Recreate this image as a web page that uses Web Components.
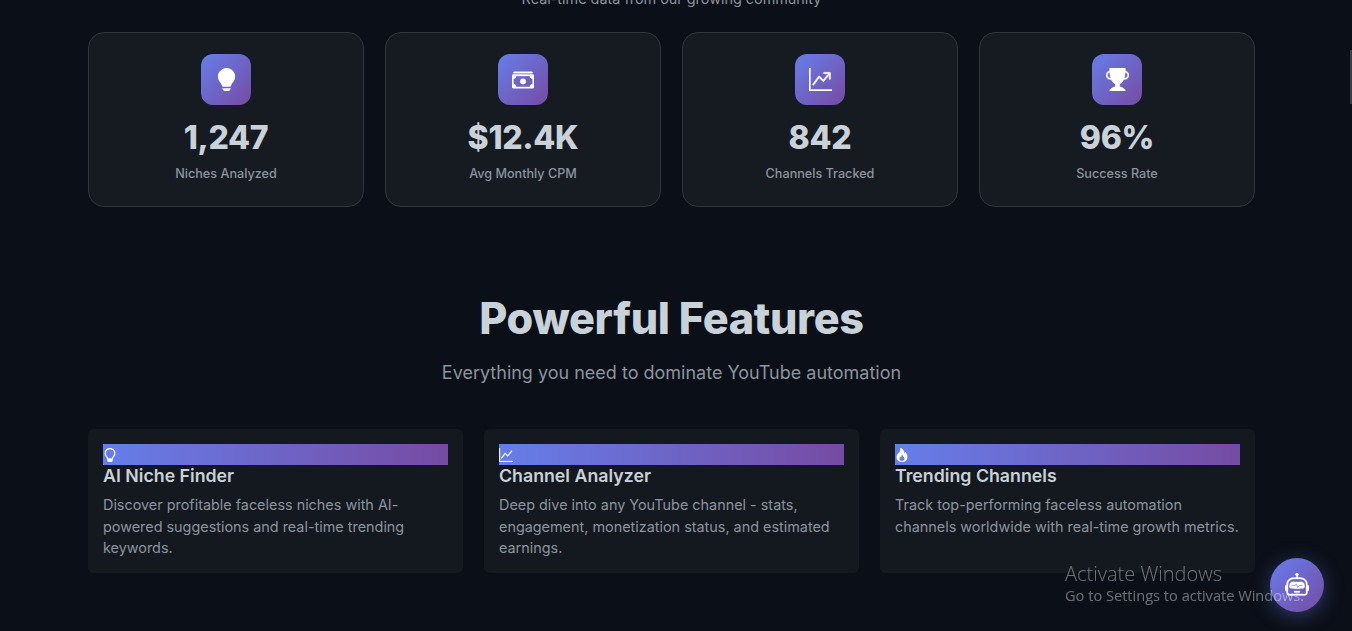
<!DOCTYPE html>
<html lang="en">
<head>
<meta charset="utf-8">
<title>Powerful Features</title>
<style>
  html, body { margin: 0; height: 631px; overflow: hidden; background: #0b0f17; }
  body { font-family: 'Inter', 'Liberation Sans', sans-serif; color: #c9d1d9; }
  #page { display: flex; flex-direction: column; align-items: center; width: 1343px; margin-top: -13px; }
  #stats, #features { width: 1167px; display: grid; gap: 21px; }
  #stats { grid-template-columns: repeat(4, 1fr); }
  #features { grid-template-columns: repeat(3, 1fr); }
  #tagline { font-size: 14.4px; line-height: 24px; color: #8b949e; margin-bottom: 21px; }
</style>
</head>
<body>
<div id="page">
  <div id="tagline">Real-time data from our growing community</div>
  <div id="stats">
    <stat-card icon="lightbulb-fill" value="1,247">Niches Analyzed</stat-card>
    <stat-card icon="cash-stack" value="$12.4K">Avg Monthly CPM</stat-card>
    <stat-card icon="graph-up-arrow" value="842">Channels Tracked</stat-card>
    <stat-card icon="trophy-fill" value="96%">Success Rate</stat-card>
  </div>
  <section-heading title="Powerful Features">Everything you need to dominate YouTube automation</section-heading>
  <div id="features">
    <feature-card icon="lightbulb" title="AI Niche Finder">Discover profitable faceless niches with AI-powered suggestions and real-time trending keywords.</feature-card>
    <feature-card icon="graph-up" title="Channel Analyzer">Deep dive into any YouTube channel - stats, engagement, monetization status, and estimated earnings.</feature-card>
    <feature-card icon="fire" title="Trending Channels">Track top-performing faceless automation channels worldwide with real-time growth metrics.</feature-card>
  </div>
</div>
<chat-fab></chat-fab>
<activate-note></activate-note>
<scroll-thumb></scroll-thumb>

<script>
(function() {
  const icons = {
    'lightbulb-fill': 'M2 6a6 6 0 1 1 10.174 4.31c-.203.196-.359.4-.453.619l-.762 1.769A.5.5 0 0 1 10.5 13h-5a.5.5 0 0 1-.46-.302l-.761-1.77a2 2 0 0 0-.453-.618A5.98 5.98 0 0 1 2 6m3 8.5a.5.5 0 0 1 .5-.5h5a.5.5 0 0 1 0 1l-.224.447a1 1 0 0 1-.894.553H6.618a1 1 0 0 1-.894-.553L5.5 15a.5.5 0 0 1-.5-.5',
    'lightbulb': 'M2 6a6 6 0 1 1 10.174 4.31c-.203.196-.359.4-.453.619l-.762 1.769A.5.5 0 0 1 10.5 13a.5.5 0 0 1 0 1 .5.5 0 0 1 0 1l-.224.447a1 1 0 0 1-.894.553H6.618a1 1 0 0 1-.894-.553L5.5 15a.5.5 0 0 1 0-1 .5.5 0 0 1 0-1 .5.5 0 0 1-.46-.302l-.761-1.77a2 2 0 0 0-.453-.618A5.98 5.98 0 0 1 2 6m6-5a5 5 0 0 0-3.479 8.592c.263.254.514.564.676.941L5.83 12h4.342l.632-1.467c.162-.377.413-.687.676-.941A5 5 0 0 0 8 1',
    'cash-stack': 'M1 3a1 1 0 0 1 1-1h12a1 1 0 0 1 1 1zm7 8a2 2 0 1 0 0-4 2 2 0 0 0 0 4M0 5a1 1 0 0 1 1-1h14a1 1 0 0 1 1 1v8a1 1 0 0 1-1 1H1a1 1 0 0 1-1-1zm3 0a2 2 0 0 1-2 2v4a2 2 0 0 1 2 2h10a2 2 0 0 1 2-2V7a2 2 0 0 1-2-2z',
    'graph-up-arrow': 'M0 0h1v15h15v1H0zm10 3.5a.5.5 0 0 1 .5-.5h4a.5.5 0 0 1 .5.5v4a.5.5 0 0 1-1 0V4.9l-3.613 4.417a.5.5 0 0 1-.74.037L7.06 6.767l-3.656 5.027a.5.5 0 0 1-.808-.588l4-5.5a.5.5 0 0 1 .758-.06l2.609 2.61L13.445 4H10.5a.5.5 0 0 1-.5-.5',
    'graph-up': 'M0 0h1v15h15v1H0zm14.817 3.113a.5.5 0 0 1 .07.704l-4.5 5.5a.5.5 0 0 1-.74.037L7.06 6.767l-3.656 5.027a.5.5 0 0 1-.808-.588l4-5.5a.5.5 0 0 1 .758-.06l2.609 2.61 4.15-5.073a.5.5 0 0 1 .704-.07',
    'trophy-fill': 'M2.5.5A.5.5 0 0 1 3 0h10a.5.5 0 0 1 .5.5q0 .807-.034 1.536a3 3 0 1 1-1.133 5.89c-.79 1.865-1.878 2.777-2.833 3.011v2.173l1.425.356c.194.048.377.135.537.255L13.3 15.1a.5.5 0 0 1-.3.9H3a.5.5 0 0 1-.3-.9l1.838-1.379c.16-.12.343-.207.537-.255L6.5 13.11v-2.173c-.955-.234-2.043-1.146-2.833-3.012a3 3 0 1 1-1.132-5.89A33 33 0 0 1 2.5.5m.099 2.54a2 2 0 0 0 .72 3.935c-.333-1.05-.588-2.346-.72-3.935m10.083 3.935a2 2 0 0 0 .72-3.935c-.133 1.59-.388 2.885-.72 3.935',
    'fire': 'M8 16c3.314 0 6-2 6-5.5 0-1.5-.5-4-2.5-6 .25 1.5-1.25 2-1.25 2C11 4 9 .5 6 0c.357 2 .5 4-2 6-1.25 1-2 2.729-2 4.5C2 14 4.686 16 8 16m0-1c-1.657 0-3-1-3-2.75 0-.75.25-2 1.25-3C6.125 10 7 10.5 7 10.5c-.375-1.25.5-3.25 2-3.5-.179 1-.25 2 1 3 .625.5 1 1.364 1 2.25C11 14 9.657 15 8 15',
    'robot': 'M6 12.5a.5.5 0 0 1 .5-.5h3a.5.5 0 0 1 0 1h-3a.5.5 0 0 1-.5-.5M3 8.062C3 6.76 4.235 5.765 5.53 5.886a26.6 26.6 0 0 0 4.94 0C11.765 5.765 13 6.76 13 8.062v1.157a.93.93 0 0 1-.765.935c-.845.147-2.34.346-4.235.346s-3.39-.2-4.235-.346A.93.93 0 0 1 3 9.219zm4.542-.827a.25.25 0 0 0-.217.068l-.92.9a25 25 0 0 1-1.871-.183.25.25 0 0 0-.068.495c.55.076 1.232.149 2.02.193a.25.25 0 0 0 .189-.071l.754-.736.847 1.71a.25.25 0 0 0 .404.062l.932-.97a25 25 0 0 0 1.922-.188.25.25 0 0 0-.068-.495c-.538.074-1.207.145-1.98.189a.25.25 0 0 0-.166.076l-.754.785-.842-1.7a.25.25 0 0 0-.182-.135M8.5 1.866a1 1 0 1 0-1 0V3h-2A4.5 4.5 0 0 0 1 7.5V8a1 1 0 0 0-1 1v2a1 1 0 0 0 1 1v1a2 2 0 0 0 2 2h10a2 2 0 0 0 2-2v-1a1 1 0 0 0 1-1V9a1 1 0 0 0-1-1v-.5A4.5 4.5 0 0 0 10.5 3h-2zM14 7.5V13a1 1 0 0 1-1 1H3a1 1 0 0 1-1-1V7.5A3.5 3.5 0 0 1 5.5 4h5A3.5 3.5 0 0 1 14 7.5'
  };

  function iconSvg(name, size, bold) {
    const stroke = bold ? ` stroke="#fff" stroke-width="${bold}"` : '';
    return `<svg xmlns="http://www.w3.org/2000/svg" width="${size}" height="${size}" viewBox="0 0 16 16" fill="#fff"${stroke}><path fill-rule="evenodd" d="${icons[name]}"/></svg>`;
  }

  class StatCard extends HTMLElement {
    constructor() {
      super();
      this.attachShadow({mode: 'open'});
    }
    connectedCallback() {
      const name = this.getAttribute('icon');
      const size = name === 'cash-stack' ? 22 : 23;
      const bold = name === 'lightbulb-fill' ? 0 : 0.3;
      this.shadowRoot.innerHTML = `
      <style>
        :host {
          display: flex;
          flex-direction: column;
          align-items: center;
          box-sizing: border-box;
          height: 175px;
          padding-top: 21px;
          background: #161b22;
          border: 1px solid #30363d;
          border-radius: 16px;
        }
        #icon {
          width: 50px;
          height: 51px;
          display: flex;
          align-items: center;
          justify-content: center;
          background: linear-gradient(135deg, #667eea, #764ba2);
          border-radius: 12px;
        }
        #value {
          margin-top: 12px;
          font-size: 32px;
          line-height: 42px;
          font-weight: 800;
          letter-spacing: -0.3px;
          color: #c9d1d9;
        }
        #label {
          margin-top: 5px;
          font-size: 12.64px;
          line-height: 20px;
          font-weight: 500;
          color: #8b949e;
        }
      </style>
      <div id="icon">${iconSvg(name, size, bold)}</div>
      <div id="value">${this.getAttribute('value')}</div>
      <div id="label"><slot></slot></div>`;
    }
  }

  class SectionHeading extends HTMLElement {
    constructor() {
      super();
      this.attachShadow({mode: 'open'});
    }
    connectedCallback() {
      this.shadowRoot.innerHTML = `
      <style>
        :host {
          display: block;
          text-align: center;
          padding: 84px 0 42px;
        }
        h2 {
          margin: 0;
          font-size: 43.2px;
          line-height: 54px;
          font-weight: 800;
          letter-spacing: -0.32px;
          color: #c9d1d9;
        }
        p {
          margin: 14px 0 0;
          font-size: 18px;
          line-height: 28px;
          color: #8b949e;
        }
      </style>
      <h2>${this.getAttribute('title')}</h2>
      <p><slot></slot></p>`;
    }
  }

  class FeatureCard extends HTMLElement {
    constructor() {
      super();
      this.attachShadow({mode: 'open'});
    }
    connectedCallback() {
      this.shadowRoot.innerHTML = `
      <style>
        :host {
          display: block;
          box-sizing: border-box;
          height: 144px;
          padding: 15px;
          background: #141920;
          border-radius: 6px;
        }
        #bar {
          height: 21px;
          display: flex;
          align-items: center;
          background: linear-gradient(90deg, #667eea, #764ba2);
        }
        #bar svg { display: block; }
        h3 {
          margin: 0;
          font-size: 17.76px;
          line-height: 21px;
          font-weight: 600;
          color: #c9d1d9;
        }
        p {
          margin: 8px 0 0;
          font-size: 14.4px;
          line-height: 21.6px;
          color: #8b949e;
        }
      </style>
      <div id="bar">${iconSvg(this.getAttribute('icon'), 14, 0.4)}</div>
      <h3>${this.getAttribute('title')}</h3>
      <p><slot></slot></p>`;
    }
  }

  class ChatFab extends HTMLElement {
    constructor() {
      super();
      this.attachShadow({mode: 'open'});
      this.shadowRoot.innerHTML = `
      <style>
        :host {
          position: fixed;
          left: 1270px;
          top: 558px;
          width: 54px;
          height: 54px;
          display: flex;
          align-items: center;
          justify-content: center;
          border-radius: 50%;
          background: linear-gradient(135deg, #667eea, #764ba2);
          box-shadow: 0 4px 20px rgba(102, 126, 234, 0.4);
        }
      </style>
      ${iconSvg('robot', 24, 0.2)}`;
    }
  }

  class ActivateNote extends HTMLElement {
    constructor() {
      super();
      this.attachShadow({mode: 'open'});
      this.shadowRoot.innerHTML = `
      <style>
        :host {
          position: fixed;
          left: 1065px;
          top: 561px;
          font-family: 'Open Sans', 'Noto Sans', sans-serif;
          color: rgba(255, 255, 255, 0.4);
          white-space: nowrap;
        }
        #big { font-size: 20px; line-height: 25px; font-weight: 300; }
        #small { font-size: 14.6px; line-height: 19px; font-weight: 400; }
      </style>
      <div id="big">Activate Windows</div>
      <div id="small">Go to Settings to activate Windows.</div>`;
    }
  }

  // bit of the window scrollbar visible at the right edge
  class ScrollThumb extends HTMLElement {
    constructor() {
      super();
      this.attachShadow({mode: 'open'});
      this.shadowRoot.innerHTML = `
      <style>
        :host {
          position: fixed;
          right: 0;
          top: 50px;
          width: 2px;
          height: 54px;
          background: #3a3f47;
        }
      </style>`;
    }
  }

  customElements.define('stat-card', StatCard);
  customElements.define('section-heading', SectionHeading);
  customElements.define('feature-card', FeatureCard);
  customElements.define('chat-fab', ChatFab);
  customElements.define('activate-note', ActivateNote);
  customElements.define('scroll-thumb', ScrollThumb);
})();
</script>
</body>
</html>
